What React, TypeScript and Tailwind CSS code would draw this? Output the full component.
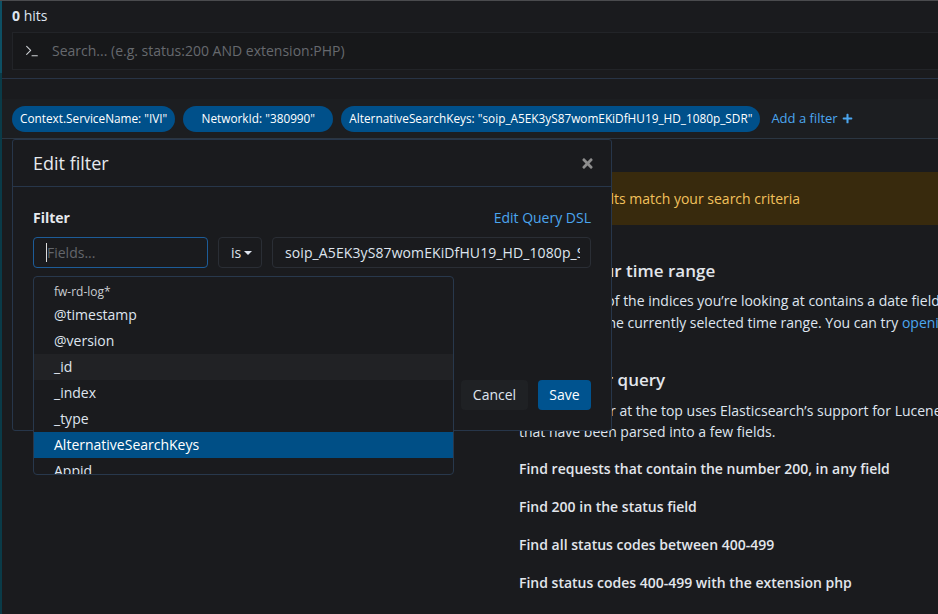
import { Terminal, HelpCircle } from 'lucide-react';
import { FaTimes, FaPlus } from 'react-icons/fa';

const fields = ['@timestamp', '@version', '_id', '_index', '_type', 'AlternativeSearchKeys', 'Appid'];

const examples = [
  'Find requests that contain the number 200, in any field',
  'Find 200 in the status field',
  'Find all status codes between 400-499',
  'Find status codes 400-499 with the extension php',
];

function FilterPill({ label, wide }: { label: string; wide?: boolean }) {
  return (
    <div
      className={`flex h-[26px] items-center rounded-full bg-[#00508a] px-2 text-[11.8px] text-white ${
        wide ? 'min-w-[150px] justify-center' : ''
      }`}
    >
      {label}
    </div>
  );
}

function FieldDropdown() {
  return (
    <div className="absolute left-[20px] top-[136px] h-[199px] w-[421px] overflow-hidden rounded-[4px] border border-[#28384c] bg-[#1a1b1e]">
      <div className="pt-[4px]">
        <div className="flex h-[21px] items-center px-5 text-xs text-[#c9ccd1]">fw-rd-log*</div>
        {fields.map((f) => (
          <div
            key={f}
            className={`flex h-[26px] items-center px-5 text-sm ${
              f === 'AlternativeSearchKeys'
                ? 'bg-[#004f86] text-white'
                : f === '_id'
                ? 'bg-[#212225] text-[#dfe5ef]'
                : 'text-[#dfe5ef]'
            }`}
          >
            {f}
          </div>
        ))}
      </div>
    </div>
  );
}

function EditFilterModal() {
  return (
    <div className="absolute left-[12px] top-[138px] flex h-[292px] w-[600px] flex-col rounded-[3px] border border-[#27364a] bg-[#1a1b1e]">
      {/* Header */}
      <div className="flex h-[47px] items-center justify-between border-b border-[#27364a] pl-5 pr-4">
        <span className="text-lg text-[#e6e9ee]">Edit filter</span>
        <FaTimes className="h-[15px] w-[15px] text-[#8d8d8d]" />
      </div>

      {/* Body */}
      <div className="px-5 pt-[21px]">
        <div className="flex h-5 items-center justify-between">
          <span className="text-sm font-bold text-[#e6e9ee]">Filter</span>
          <span className="text-sm text-[#4ba6ef]">Edit Query DSL</span>
        </div>
        <div className="mt-[9px] flex h-[31px] gap-[10px]">
          <div className="flex w-[175px] items-center rounded-[4px] border border-[#1d5c98] pl-3">
            <span className="h-[19px] w-px bg-[#dcdcdc]"></span>
            <span className="text-sm text-[#63666b]">Fields...</span>
          </div>
          <div className="flex w-[44px] items-center gap-[3px] rounded-[4px] border border-[#2a2e35] pl-[12px] text-sm text-[#dfe5ef]">
            is
            <span className="mt-[1px] h-0 w-0 border-x-[4px] border-t-[4px] border-x-transparent border-t-[#dfe5ef]"></span>
          </div>
          <div className="flex flex-1 items-center overflow-hidden whitespace-nowrap rounded-[4px] border border-[#2a2e35] pl-3 pr-[10px] text-sm tracking-[0.1px] text-[#dfe5ef]">
            <span className="overflow-hidden">soip_A5EK3yS87womEKiDfHU19_HD_1080p_SDR</span>
          </div>
        </div>
      </div>

      {/* Footer */}
      <div className="mt-auto flex justify-end gap-[10px] px-5 pb-5">
        <button className="h-[30px] w-[67px] rounded-[4px] bg-[#1f2124] text-sm text-[#dfe5ef]">Cancel</button>
        <button className="h-[30px] w-[53px] rounded-[4px] bg-[#00538f] text-sm text-white">Save</button>
      </div>

      <FieldDropdown />
    </div>
  );
}

export default function App() {
  return (
    <div className="relative flex h-[614px] w-[938px] overflow-hidden border-t border-[#4a4b4e] bg-[#1a1b1e] font-['Open_Sans',sans-serif] text-[#dfe5ef]">
      {/* Side strip */}
      <div className="flex w-[2px] flex-col">
        <div className="h-[72px] bg-[#0d5064]"></div>
        <div className="flex-1 bg-[#0a3b48]"></div>
      </div>

      <div className="flex min-w-0 flex-1 flex-col">
        {/* Hits + query bar */}
        <div className="border-b border-[#283446] pb-2 pl-[10px]">
          <div className="pt-[5px] text-sm leading-5">
            <span className="font-bold">0</span> hits
          </div>
          <div className="-mr-2 mt-[6px] flex h-[38px] items-center gap-[12px] border border-[#222428] bg-[#17181a] pl-[11px]">
            <Terminal className="h-4 w-4 text-[#cfd2d6]" strokeWidth={1.6} />
            <span className="text-sm text-[#66696e]">Search... (e.g. status:200 AND extension:PHP)</span>
          </div>
        </div>

        {/* Filter bar */}
        <div className="mt-5 flex h-[40px] items-center gap-2 border-b border-[#2b3642] bg-[#1c1e21] pl-[10px]">
          <FilterPill label={'Context.ServiceName: "IVI"'} />
          <FilterPill label={'NetworkId: "380990"'} wide />
          <FilterPill label={'AlternativeSearchKeys: "soip_A5EK3yS87womEKiDfHU19_HD_1080p_SDR"'} />
          <span className="ml-[3px] flex items-center gap-1 text-[13px] text-[#4ba6ef]">
            Add a filter
            <FaPlus className="h-[11px] w-[11px]" />
          </span>
        </div>

        {/* Results area */}
        <div className="flex flex-1">
          <div className="w-[501px] shrink-0"></div>
          <div className="min-w-0 flex-1 overflow-hidden whitespace-nowrap">
            <div className="mt-[33px] flex h-[53px] items-center gap-3 bg-[#382a0d] pl-4 text-sm text-[#f2c15c]">
              <HelpCircle className="h-4 w-4" />
              <span className="ml-[12px]">No results match your search criteria</span>
            </div>

            <div className="pl-4">
              <div className="mt-[34px] h-6 text-[17px] font-semibold leading-6 text-[#e2e6ec]">Expand your time range</div>
              <div className="mt-[7px] text-sm leading-[22px]">
                <div>One or more of the indices you’re looking at contains a date field. Your query may not match anything in the current time range, or there may not be any</div>
                <div>
                  data at all in the currently selected time range. You can try{' '}
                  <span className="text-[#4ba6ef]">opening the time picker</span> and changing the time range to one which contains data.
                </div>
              </div>

              <div className="mt-[34px] h-6 text-[17px] font-semibold leading-6 text-[#e2e6ec]">Refine your query</div>
              <div className="mt-[8px] text-sm leading-[21px]">
                <div>The search bar at the top uses Elasticsearch’s support for Lucene Query String syntax. Here are some examples of how you can search for web server logs</div>
                <div>that have been parsed into a few fields.</div>
              </div>

              <div className="mt-[16px] flex flex-col gap-4">
                {examples.map((e) => (
                  <div key={e} className="text-sm font-semibold leading-[22px] text-[#e2e6ec]">
                    {e}
                  </div>
                ))}
              </div>
            </div>
          </div>
        </div>
      </div>

      <EditFilterModal />
    </div>
  );
}
